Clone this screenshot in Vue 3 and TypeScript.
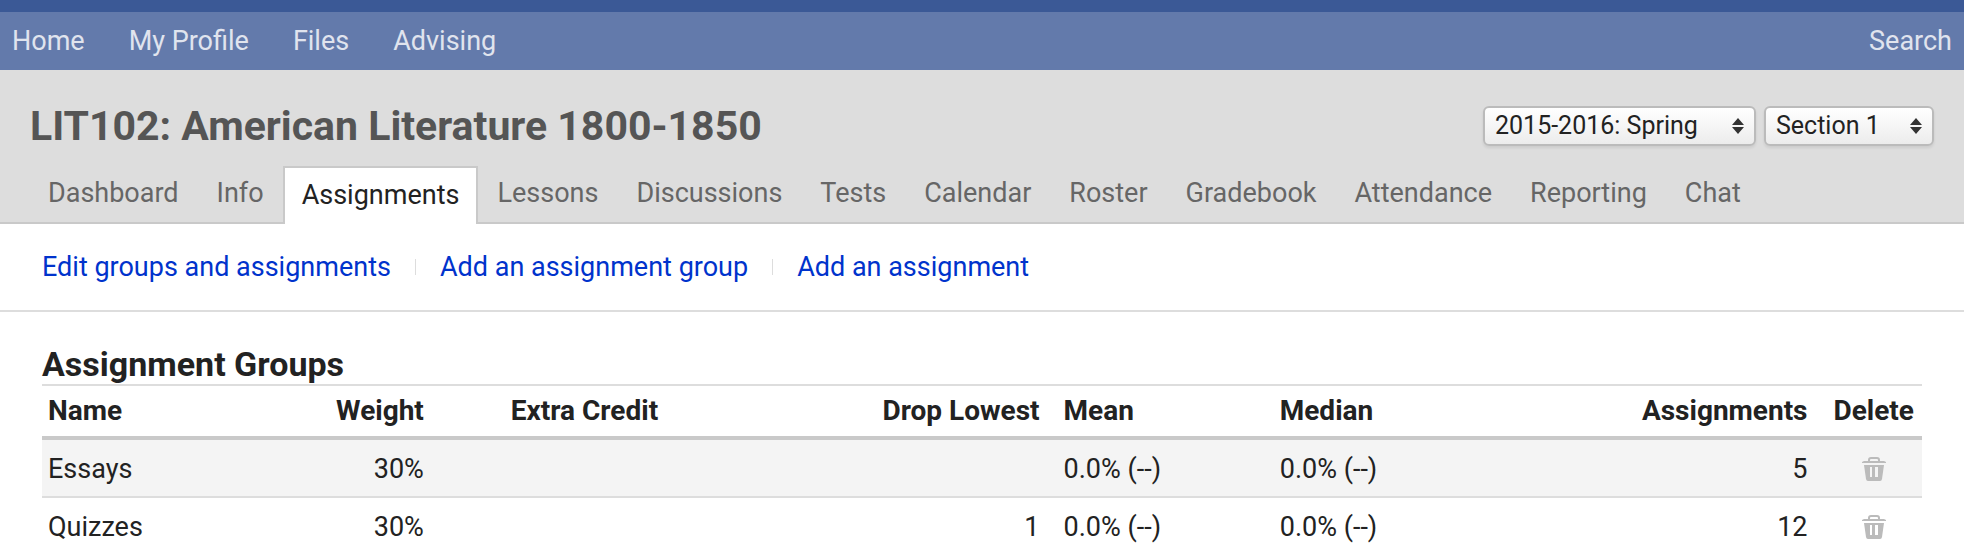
<script setup lang="ts">
import { ref } from 'vue'

interface Group {
  name: string
  weight: string
  extra: string
  drop: string
  mean: string
  median: string
  count: number
}

const menu: string[] = ['Home', 'My Profile', 'Files', 'Advising']
const tabs: string[] = [
  'Dashboard', 'Info', 'Assignments', 'Lessons', 'Discussions', 'Tests',
  'Calendar', 'Roster', 'Gradebook', 'Attendance', 'Reporting', 'Chat',
]
const activeTab = ref('Assignments')
const actions: string[] = ['Edit groups and assignments', 'Add an assignment group', 'Add an assignment']
const term = ref('2015-2016: Spring')
const section = ref('Section 1')
const groups: Group[] = [
  { name: 'Essays', weight: '30%', extra: '', drop: '', mean: '0.0% (--)', median: '0.0% (--)', count: 5 },
  { name: 'Quizzes', weight: '30%', extra: '', drop: '1', mean: '0.0% (--)', median: '0.0% (--)', count: 12 },
]
</script>

<template>
  <div class="page">
    <nav class="menu" aria-label="Main">
      <a v-for="item in menu" :key="item" href="#">{{ item }}</a>
      <a class="search" href="#">Search</a>
    </nav>

    <header class="course">
      <div class="course-top">
        <h1>LIT102: American Literature 1800-1850</h1>
        <div class="pickers">
          <div class="picker term">
            <select v-model="term" aria-label="Term">
              <option>2015-2016: Spring</option>
            </select>
            <svg viewBox="0 0 12 16" aria-hidden="true"><path d="M6 0l6 7H0zM0 9h12l-6 7z" /></svg>
          </div>
          <div class="picker section">
            <select v-model="section" aria-label="Section">
              <option>Section 1</option>
            </select>
            <svg viewBox="0 0 12 16" aria-hidden="true"><path d="M6 0l6 7H0zM0 9h12l-6 7z" /></svg>
          </div>
        </div>
      </div>
      <nav class="tabs" aria-label="Course">
        <a
          v-for="tab in tabs"
          :key="tab"
          href="#"
          :class="{ active: tab === activeTab }"
          @click.prevent="activeTab = tab"
        >{{ tab }}</a>
      </nav>
    </header>

    <div class="actions">
      <a v-for="action in actions" :key="action" href="#">{{ action }}</a>
    </div>

    <main>
      <h2 id="groups-title">Assignment Groups</h2>
      <table aria-labelledby="groups-title">
        <thead>
          <tr>
            <th class="name">Name</th>
            <th class="weight">Weight</th>
            <th class="extra">Extra Credit</th>
            <th class="drop">Drop Lowest</th>
            <th class="mean">Mean</th>
            <th class="median">Median</th>
            <th class="count">Assignments</th>
            <th class="delete">Delete</th>
          </tr>
        </thead>
        <tbody>
          <tr v-for="group in groups" :key="group.name">
            <td class="name">{{ group.name }}</td>
            <td class="weight">{{ group.weight }}</td>
            <td class="extra">{{ group.extra }}</td>
            <td class="drop">{{ group.drop }}</td>
            <td class="mean">{{ group.mean }}</td>
            <td class="median">{{ group.median }}</td>
            <td class="count">{{ group.count }}</td>
            <td class="delete">
              <button type="button" :aria-label="'Delete ' + group.name">
                <svg viewBox="0 0 24 24" aria-hidden="true">
                  <path d="M0 6V5l2-1h4V3q0-3 3-3h6q3 0 3 3v1h4l2 1v1zM8 4h8V3q0-1-1-1H9q-1 0-1 1z" fill-rule="evenodd" />
                  <path d="M2 8h20l-2 14q-.3 2-2 2H6q-1.700 0-2-2zM8 10v10h2V10zM13 10v10h3V10z" fill-rule="evenodd" />
                </svg>
              </button>
            </td>
          </tr>
        </tbody>
      </table>
    </main>
  </div>
</template>

<style>
body {
  margin: 0;
  background: #fff;
}
</style>

<style scoped>
.page {
  border-top: 12px solid #3b5996;
  color: #222;
  font-family: Roboto, "Liberation Sans", sans-serif;
  font-size: 27px;
  line-height: 32px;
}

a {
  text-decoration: none;
}

.menu {
  display: flex;
  gap: 44px;
  padding: 13px 12px;
  background: #637aab;
}

.menu a {
  color: #e0e4ee;
}

.menu .search {
  margin-left: auto;
}

.course {
  padding-top: 36px;
  background: #ddd;
}

.course-top {
  display: flex;
  align-items: center;
  justify-content: space-between;
  height: 40px;
  padding: 0 30px;
}

h1 {
  margin: 0;
  color: #555;
  font-size: 41px;
  line-height: 40px;
}

.pickers {
  display: flex;
  gap: 8px;
}

.picker {
  position: relative;
}

.term {
  width: 273px;
}

.section {
  width: 170px;
}

.picker select {
  display: block;
  box-sizing: border-box;
  width: 100%;
  height: 40px;
  padding: 0 10px;
  appearance: none;
  border: 2px solid #bbb;
  border-radius: 6px;
  background: linear-gradient(#fff, #ececec);
  box-shadow: 0 2px 3px rgba(0, 0, 0, 0.08);
  color: #222;
  font: inherit;
  font-size: 25px;
}

.picker svg {
  position: absolute;
  top: 12px;
  right: 12px;
  width: 12px;
  height: 16px;
  fill: #333;
  pointer-events: none;
}

.tabs {
  display: flex;
  padding: 20px 29px 0;
  border-bottom: 2px solid #c9c9c9;
}

.tabs a {
  padding: 11px 19px 13px;
  color: #666;
}

.tabs .active {
  margin-bottom: -2px;
  padding: 11px 17px 13px;
  border: 2px solid #c9c9c9;
  border-bottom: 0;
  background: #fff;
  color: #222;
}

.actions {
  display: flex;
  padding: 27px 42px;
  border-bottom: 2px solid #ddd;
}

.actions a {
  display: flex;
  align-items: center;
  color: #03c;
}

.actions a + a::before {
  width: 1px;
  height: 16px;
  margin: 0 24px;
  background: #ddd;
  content: "";
}

main {
  padding: 34px 42px 0;
}

h2 {
  margin: 0;
  padding-bottom: 2px;
  font-size: 34px;
  line-height: 36px;
}

table {
  width: 100%;
  border-collapse: separate;
  border-spacing: 0;
  border-top: 2px solid #ddd;
  table-layout: fixed;
}

th,
td {
  box-sizing: border-box;
  padding: 13px 12px 11px;
  text-align: left;
  white-space: nowrap;
}

th {
  padding: 9px 12px;
  border-bottom: 4px solid #c9c9c9;
  font-size: 28px;
}

td {
  border-bottom: 2px solid #ddd;
}

tbody tr:nth-child(odd) {
  background: #f4f4f4;
}

.name {
  width: 12%;
  padding-left: 6px;
}

.weight {
  width: 12.3%;
  padding-right: 75px;
}

.extra {
  width: 15%;
}

.drop {
  width: 14.4%;
}

.mean {
  width: 11.5%;
}

.median {
  width: 14%;
}

.count {
  width: 15.35%;
}

.weight,
.drop,
.count {
  text-align: right;
}

.delete {
  padding-right: 6px;
  text-align: center;
}

.delete button {
  display: block;
  margin: 0 auto;
  padding: 0;
  border: 0;
  background: none;
}

.delete svg {
  display: block;
  width: 24px;
  height: 24px;
  fill: #bbb;
}
</style>
